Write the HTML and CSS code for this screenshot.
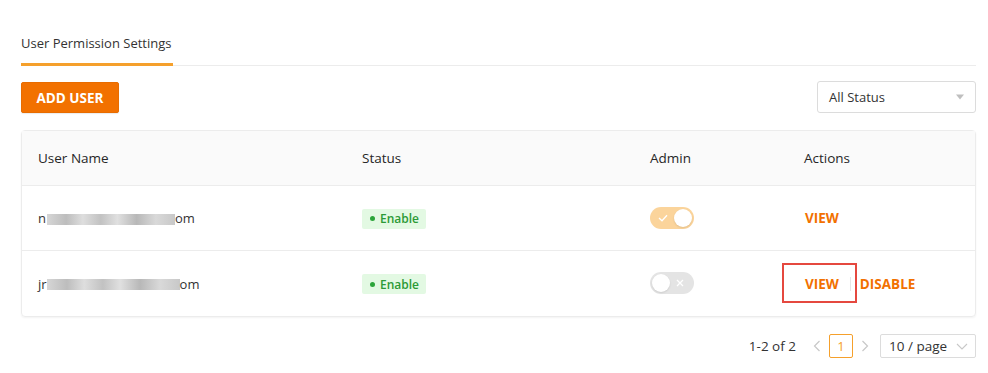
FILE: index.html
```html
<!DOCTYPE html>
<html>
<head>
<meta charset="utf-8">
<link rel="stylesheet" href="styles.css">
</head>
<body>
<div class="page">
  <div class="tabs">
    <div class="tab active">User Permission Settings</div>
  </div>
  <div class="toolbar">
    <button class="btn-primary">ADD USER</button>
    <div class="select">
      <span>All Status</span>
      <svg class="caret" width="10" height="6" viewBox="0 0 10 6"><path d="M1 0.5 L9 0.5 L5 5.5 Z" fill="#bfbfbf"/></svg>
    </div>
  </div>
  <div class="table">
    <div class="row head">
      <div class="c1">User Name</div>
      <div class="c2">Status</div>
      <div class="c3">Admin</div>
      <div class="c4">Actions</div>
    </div>
    <div class="row">
      <div class="c1 email"><span>n</span><span class="blur b1"></span><span>om</span></div>
      <div class="c2"><span class="tag"><i class="dot"></i>Enable</span></div>
      <div class="c3">
        <span class="switch on">
          <svg class="ico" width="10" height="8" viewBox="0 0 10 8"><path d="M1 4 L4 6.8 L9 1.2" fill="none" stroke="#fff" stroke-width="1.3"/></svg>
          <span class="knob"></span>
        </span>
      </div>
      <div class="c4"><a class="act first">VIEW</a></div>
    </div>
    <div class="row last">
      <div class="c1 email"><span>jr</span><span class="blur b2"></span><span>om</span></div>
      <div class="c2"><span class="tag"><i class="dot"></i>Enable</span></div>
      <div class="c3">
        <span class="switch off">
          <span class="knob"></span>
          <svg class="ico" width="8" height="8" viewBox="0 0 8 8"><path d="M1 1 L7 7 M7 1 L1 7" fill="none" stroke="#fff" stroke-width="1.3"/></svg>
        </span>
      </div>
      <div class="c4 acts">
        <a class="act first">VIEW</a><span class="sep"></span><a class="act">DISABLE</a>
        <span class="mark"></span>
      </div>
    </div>
  </div>
  <div class="pager">
    <span class="total">1-2 of 2</span>
    <svg class="arrow" width="8" height="12" viewBox="0 0 8 12"><path d="M6.5 1 L1.5 6 L6.5 11" fill="none" stroke="#c8c8c8" stroke-width="1.2"/></svg>
    <span class="pnum">1</span>
    <svg class="arrow" width="8" height="12" viewBox="0 0 8 12"><path d="M1.5 1 L6.5 6 L1.5 11" fill="none" stroke="#c8c8c8" stroke-width="1.2"/></svg>
    <span class="psize">10 / page
      <svg width="12" height="7" viewBox="0 0 12 7"><path d="M1 1 L6 6 L11 1" fill="none" stroke="#c8c8c8" stroke-width="1.1"/></svg>
    </span>
  </div>
</div>
</body>
</html>
```
FILE: styles.css
```css
* { box-sizing: border-box; }
body {
  margin: 0;
  background: #fff;
  font-family: "Open Sans", "Noto Sans", "Liberation Sans", sans-serif;
  color: #262626;
  font-size: 13px;
}
.page {
  padding: 27px 12px 0 21px;
}
.tabs {
  display: flex;
  border-bottom: 1px solid #ececec;
  height: 39px;
}
.tab {
  font-size: 13px;
  color: #333;
  line-height: 32px;
  padding: 0 1px 0 0;
}
.tab.active {
  border-bottom: 3px solid #f5a02c;
  margin-bottom: -1px;
  width: 152px;
}
.toolbar {
  display: flex;
  justify-content: space-between;
  align-items: flex-start;
  margin-top: 16px;
  height: 48px;
}
.btn-primary {
  background: #f27100;
  border: 1px solid #e86c00;
  color: #fff;
  font-family: inherit;
  font-weight: 700;
  font-size: 13.5px;
  height: 31px;
  width: 98px;
  border-radius: 2px;
  padding: 0;
  box-shadow: 0 1px 1px rgba(0,0,0,0.08);
}
.select {
  width: 159px;
  height: 32px;
  margin-top: -1px;
  border: 1px solid #dcdcdc;
  border-radius: 3px;
  display: flex;
  align-items: center;
  justify-content: space-between;
  padding: 0 10px 0 11px;
  font-size: 13px;
  color: #333;
}
.table {
  border: 1px solid #ececec;
  border-radius: 4px;
  box-shadow: 0 1px 2px rgba(0,0,0,0.05);
  position: relative;
}
.row {
  display: grid;
  grid-template-columns: 324px 288px 154px 1fr;
  align-items: center;
  height: 65px;
  border-bottom: 1px solid #ececec;
  padding-left: 16px;
}
.row.last { border-bottom: none; }
.row.head {
  background: #fafafa;
  height: 55px;
  font-size: 13.5px;
  color: #262626;
}
.email {
  display: flex;
  align-items: center;
  font-size: 13px;
  color: #333;
}
.blur {
  display: inline-block;
  height: 11px;
  background: linear-gradient(90deg, #d6d6d6 0%, #bdbdbd 15%, #dedede 28%, #c2c2c2 42%, #e0e0e0 55%, #b8b8b8 70%, #d9d9d9 85%, #c8c8c8 100%);
  margin-top: 2px;
}
.b1 { width: 128px; margin-left: 1px; }
.b2 { width: 133px; margin-left: 0; }
.tag {
  display: inline-flex;
  align-items: center;
  background: #e3f9e3;
  color: #2c9a36;
  font-size: 12px;
  font-weight: 600;
  height: 20px;
  padding: 0 7px 0 8px;
  border-radius: 2px;
}
.dot {
  width: 5px;
  height: 5px;
  border-radius: 50%;
  background: #2ca53a;
  margin-right: 5px;
}
.switch {
  display: inline-flex;
  align-items: center;
  width: 44px;
  height: 22px;
  border-radius: 11px;
  padding: 0 2px;
  justify-content: space-between;
}
.switch.on { background: #fbd49b; padding-left: 8px; }
.switch.off { background: #e4e4e4; padding-right: 10px; }
.knob {
  width: 18px;
  height: 18px;
  border-radius: 50%;
  background: #fff;
  box-shadow: 0 1px 2px rgba(0,0,0,0.1);
}
.act {
  color: #f27100;
  font-weight: 700;
  font-size: 13.5px;
}
.act.first { margin-left: 1px; }
.acts {
  display: flex;
  align-items: center;
  position: relative;
}
.sep {
  width: 1px;
  height: 14px;
  background: #e6e6e6;
  margin: 0 9px 0 11px;
}
.mark {
  position: absolute;
  left: -22px;
  top: -12px;
  width: 75px;
  height: 40px;
  border: 2px solid #e5483f;
}
.pager {
  display: flex;
  justify-content: flex-end;
  align-items: center;
  margin-top: 17px;
  font-size: 13.5px;
  color: #333;
}
.total { margin-right: 17px; }
.arrow { margin: 0; }
.pnum {
  width: 24px;
  height: 24px;
  border: 1px solid #f5a02c;
  border-radius: 2px;
  color: #f5a02c;
  display: inline-flex;
  align-items: center;
  justify-content: center;
  margin: 0 8px;
  font-size: 13px;
}
.psize {
  margin-left: 11px;
  width: 96px;
  height: 24px;
  border: 1px solid #dcdcdc;
  border-radius: 2px;
  display: inline-flex;
  align-items: center;
  justify-content: space-between;
  padding: 0 7px 0 8px;
}
```
